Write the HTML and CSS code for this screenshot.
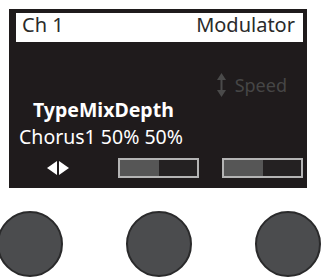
FILE: index.html
```
<!DOCTYPE html>
<html>
<head>
<meta charset="utf-8">
<link rel="stylesheet" href="styles.css">
</head>
<body>
<div class="device">
  <div class="screen">
    <div class="header">
      <span>Ch 1</span>
      <span>Modulator</span>
    </div>
    <div class="speed">
      <svg class="updown" width="9" height="24" viewBox="0 0 9 24">
        <polygon points="0,7 4.5,0 9,7" fill="#4a4a4a"/>
        <rect x="3.5" y="6" width="2" height="12" fill="#4a4a4a"/>
        <polygon points="0,17 4.5,24 9,17" fill="#4a4a4a"/>
      </svg>
      <span>Speed</span>
    </div>
    <div class="title">TypeMixDepth</div>
    <div class="value">Chorus1 50% 50%</div>
    <div class="controls">
      <svg class="arrows" width="22" height="14" viewBox="0 0 22 14">
        <polygon points="10,0 0,7 10,14" fill="#ffffff"/>
        <polygon points="12,0 22,7 12,14" fill="#ffffff"/>
      </svg>
      <div class="bar bar1"><div class="fill"></div></div>
      <div class="bar bar2"><div class="fill"></div></div>
    </div>
  </div>
  <div class="knobs">
    <div class="knob k1"></div>
    <div class="knob k2"></div>
    <div class="knob k3"></div>
  </div>
</div>
</body>
</html>
```
FILE: styles.css
```
html, body {
  margin: 0;
  padding: 0;
  background: #ffffff;
  overflow: hidden;
}
.device {
  width: 323px;
  height: 279px;
  padding-top: 9px;
  box-sizing: border-box;
  font-family: "Noto Sans", "DejaVu Sans", sans-serif;
}
.screen {
  margin-left: 9px;
  width: 298px;
  height: 179px;
  box-sizing: border-box;
  background: #1f1b1c;
  padding: 4px 4px 0 7px;
  display: flex;
  flex-direction: column;
}
.header {
  height: 29px;
  background: #ffffff;
  display: flex;
  justify-content: space-between;
  align-items: flex-start;
  padding: 0 8px 0 6px;
  font-size: 20px;
  line-height: 24px;
  color: #2a2a2a;
}
.speed {
  margin-top: 32px;
  height: 22px;
  display: flex;
  justify-content: flex-end;
  align-items: center;
  padding-right: 16px;
  font-size: 18px;
  line-height: 22px;
  color: #464646;
}
.updown {
  margin-right: 9px;
  flex: none;
}
.title {
  margin-top: 2px;
  margin-left: 17px;
  font-size: 19.5px;
  line-height: 24px;
  font-weight: bold;
  color: #ffffff;
}
.value {
  margin-top: 3px;
  margin-left: 3px;
  font-size: 19.5px;
  line-height: 24px;
  color: #ffffff;
}
.controls {
  margin-top: 9px;
  height: 20px;
  display: flex;
  align-items: center;
}
.arrows {
  margin-left: 31px;
  flex: none;
}
.bar {
  width: 81px;
  height: 20px;
  box-sizing: border-box;
  border: 2px solid #b4b4b4;
  background: #242122;
  display: flex;
}
.bar1 {
  margin-left: 49px;
}
.bar2 {
  margin-left: 23px;
}
.fill {
  width: 50%;
  height: 100%;
  background: #565656;
}
.knobs {
  margin-top: 23px;
  display: flex;
  gap: 63px;
  margin-left: -3px;
}
.knob {
  width: 66px;
  height: 66px;
  flex: none;
  box-sizing: border-box;
  border-radius: 50%;
  background: #4b4c4e;
  border: 2px solid #2a2a2b;
}
```
